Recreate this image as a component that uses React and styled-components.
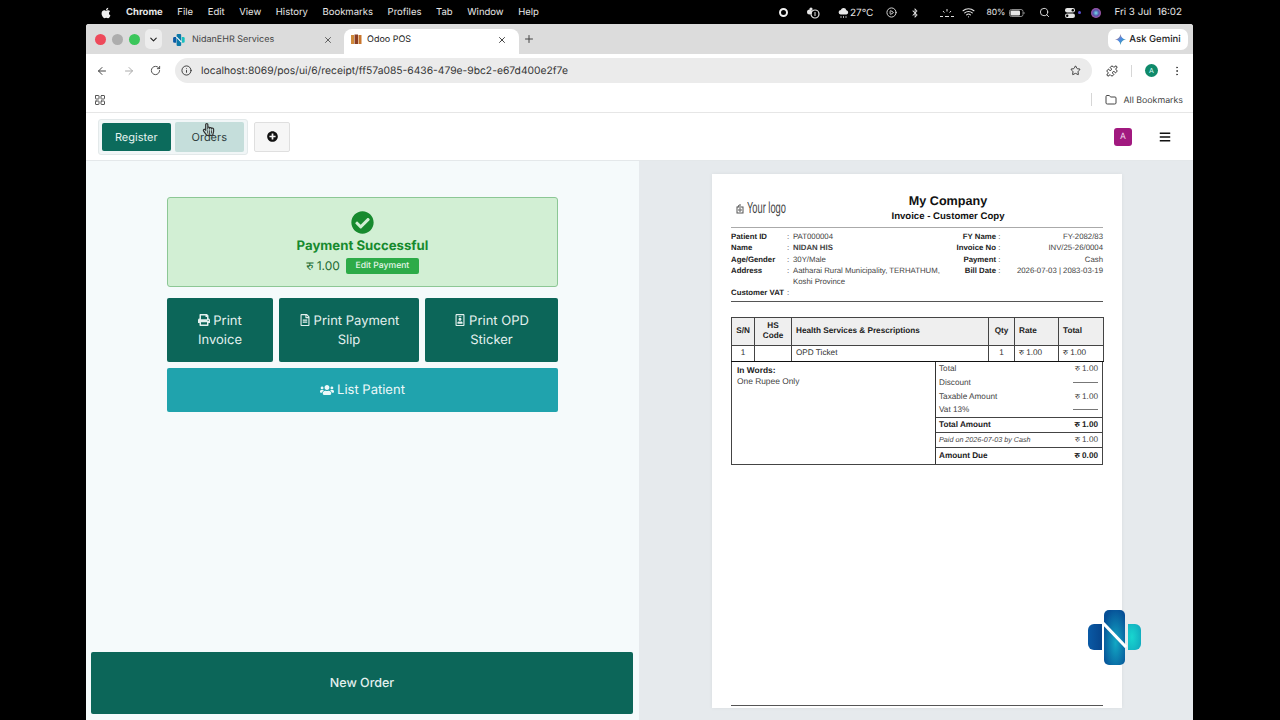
import React from "react";
import styled, { createGlobalStyle } from "styled-components";
import { FaApple, FaBluetoothB, FaPrint, FaRegFileAlt, FaRegIdBadge, FaUsers, FaCheckCircle, FaPlusCircle, FaBars, FaRegHandPointer } from "react-icons/fa";
import { ArrowLeft, ArrowRight, RotateCw, Info, Star, Puzzle, EllipsisVertical, X, Plus, ChevronDown, Folder, LayoutGrid, Wifi, Search, CirclePlay } from "lucide-react";

const Global = createGlobalStyle`
  html, body { margin: 0; padding: 0; background: #000; overflow: hidden; }
  * { box-sizing: border-box; }
  body { font-family: Inter, "Liberation Sans", sans-serif; text-rendering: geometricPrecision; }
`;
const Screen = styled.div`position: relative; width: 1280px; height: 720px; background: #000; display: flex; flex-direction: column; overflow: hidden;`;
const MenuBar = styled.div`height: 24px; display: flex; align-items: center; color: #e8e8e8; font-size: 9.5px; padding: 1px 0 0 100px; flex: none;`;
const MenuItem = styled.span`margin-left: ${p => p.$ml ?? 15}px; font-weight: ${p => (p.$bold ? 700 : 400)}; white-space: nowrap;`;
const StatusArea = styled.div`margin-left: auto; margin-right: 98px; display: flex; align-items: center; color: #e4e4e4;`;
const StatusSlot = styled.span`margin-left: ${p => p.$ml ?? 0}px; display: inline-flex; align-items: center; font-size: ${p => p.$fs ?? 10}px; white-space: nowrap;`;
const Ring = styled.span`width: 9px; height: 9px; border-radius: 50%; border: 2.5px solid #f0f0f0; display: block;`;
const Browser = styled.div`width: 1107px; margin-left: 86px; flex: 1; display: flex; flex-direction: column; overflow: hidden; background: #fff; border-radius: 3px 3px 0 0;`;
const TabStrip = styled.div`height: 30px; background: #dcdcdc; display: flex; align-items: flex-end; flex: none; padding-left: 9px; padding-right: 5px;`;
const Dots = styled.div`display: flex; gap: 6px; align-self: center;`;
const Dot = styled.span`width: 11px; height: 11px; border-radius: 50%; background: ${p => p.$c};`;
const ChevronBtn = styled.span`width: 17px; height: 20px; border-radius: 5px; background: #ededed; display: flex; align-items: center; justify-content: center; align-self: center; margin-left: 5px; color: #222;`;
const Tab = styled.div`height: 25px; width: ${p => p.$w}px; margin-left: ${p => p.$ml}px; display: flex; align-items: center; padding: 0 ${p => p.$pr}px 4px ${p => p.$pl}px; font-size: 9px; color: ${p => (p.$active ? "#222" : "#444")}; background: ${p => (p.$active ? "#fff" : "transparent")}; border-radius: 8px 8px 0 0;`;
const TabTitle = styled.span`flex: 1; margin-left: ${p => p.$ml ?? 5}px; white-space: nowrap;`;
const NewTab = styled.span`align-self: center; margin-left: 4px; display: flex; color: #444;`;
const GeminiPill = styled.div`margin-left: auto; align-self: center; width: 80px; height: 21px; background: #fff; border-radius: 7px; display: flex; align-items: center; justify-content: center; gap: 3px; font-size: 9.5px; font-weight: 500; color: #222;`;
const Toolbar = styled.div`height: 33px; display: flex; align-items: center; background: #fff; flex: none; padding-left: 10px; color: #444;`;
const NavIcon = styled.span`display: flex; margin-left: ${p => p.$ml ?? 0}px; color: ${p => p.$c ?? "#444"};`;
const UrlPill = styled.div`width: 917px; height: 25px; margin-left: 14px; background: #ebebeb; border-radius: 13px; display: flex; align-items: center; padding: 0 11px 0 6px; font-size: 10.3px; color: #333; white-space: nowrap;`;
const UrlText = styled.span`margin: 1px 0 0 9px; flex: 1;`;
const Separator = styled.span`width: 1px; height: ${p => p.$h ?? 12}px; background: #d6d6d6; margin-left: ${p => p.$ml}px;`;
const Avatar = styled.span`width: 13px; height: 13px; border-radius: 50%; background: #0f8a6a; color: #dff; font-size: 7px; display: flex; align-items: center; justify-content: center; margin-left: 13px;`;
const BookmarkBar = styled.div`height: 26px; display: flex; align-items: center; background: #fff; flex: none; padding-left: 8px; color: #555; border-bottom: 1px solid #e6e6e6;`;
const BookmarkLabel = styled.span`font-size: 8.8px; color: #444; margin: 1px 0 0 6px; white-space: nowrap;`;
const PosHeader = styled.header`height: 48px; display: flex; align-items: center; background: #fff; border-bottom: 1px solid #e4e8ea; flex: none; padding: 0 22px 0 12px;`;
const TabGroup = styled.div`height: 36px; width: 150px; background: #f1f6f7; border: 1px solid #e3e9ea; border-radius: 3px; display: flex; align-items: center; padding: 0 3px; gap: 4px;`;
const PosTab = styled.span`height: ${p => (p.$active ? 28 : 30)}px; width: ${p => (p.$active ? 69 : 70)}px; border-radius: 2px; background: ${p => (p.$active ? "#0c6b5c" : "#c5dedb")}; color: ${p => (p.$active ? "#e6f3f0" : "#2b3a3a")}; font-size: 11px; display: flex; align-items: center; justify-content: center;`;
const AddBtn = styled.span`width: 36px; height: 30px; margin-left: 6px; background: #f6f6f6; border: 1px solid #dfdfdf; border-radius: 2px; display: flex; align-items: center; justify-content: center; color: #111;`;
const UserBadge = styled.span`margin-left: auto; width: 18px; height: 18px; border-radius: 3px; background: #a1197f; color: #f2d8ec; font-size: 8.5px; display: flex; align-items: center; justify-content: center;`;
const Burger = styled.span`margin-left: 27px; display: flex; color: #111;`;
const Content = styled.main`flex: 1; display: flex; min-height: 0;`;
const LeftPanel = styled.section`width: 553px; background: #f5fafb; display: flex; flex-direction: column; align-items: center; padding: 36px 6px 6px 5px;`;
const Card = styled.div`width: 391px; margin-left: 1px; display: flex; flex-direction: column; gap: 6px;`;
const Success = styled.div`height: 90px; background: #d2efd4; border: 1px solid #8cc795; border-radius: 3px; margin-bottom: 5px; display: flex; flex-direction: column; align-items: center; padding-top: 13px; color: #178a2e;`;
const SuccessTitle = styled.div`font-size: 13.2px; font-weight: 700; margin-top: 4px; line-height: 16px;`;
const AmountRow = styled.div`display: flex; align-items: center; gap: 6px; margin-top: 3px; color: #1c6b32; font-size: 12px;`;
const EditBtn = styled.span`height: 16px; width: 73px; background: #2dab48; color: #e6f6e8; font-size: 8.6px; font-weight: 500; border-radius: 2px; display: flex; align-items: center; justify-content: center;`;
const PrintRow = styled.div`display: flex; gap: 6px;`;
const PrintBtn = styled.div`height: 64px; width: ${p => p.$w}px; flex: none; background: #0c6659; color: #e3f0ee; border-radius: 2px; font-size: 13px; line-height: 19.5px; text-align: center; display: flex; align-items: center; justify-content: center; padding: 2px 12px 0; svg { vertical-align: -1px; margin-right: 3px; }`;
const ListBtn = styled.div`height: 44px; background: #20a3ad; color: #ecf8f9; border-radius: 2px; font-size: 13px; display: flex; align-items: center; justify-content: center; gap: 3px;`;
const NewOrder = styled.div`margin-top: auto; width: 542px; height: 62px; padding-top: 1px; background: #0c6659; color: #e3f0ee; border-radius: 2px; font-size: 12.5px; font-weight: 500; display: flex; align-items: center; justify-content: center;`;
const RightPanel = styled.section`flex: 1; background: #e6eaed; padding: 13px 0 12px 73px; display: flex;`;
const Paper = styled.article`width: 410px; background: #fff; box-shadow: 0 0 4px rgba(0,0,0,.06); padding: 20px 19px 2px; display: flex; flex-direction: column; font-family: "Liberation Sans", Arial, sans-serif; color: #333;`;
const ReceiptHead = styled.div`display: flex; align-items: flex-start; height: 33px; border-bottom: 1px solid #aaa; box-sizing: content-box;`;
const LogoText = styled.div`width: 62px; padding-left: 5px; color: #444; white-space: nowrap; display: flex; align-items: center; gap: 3px; margin-top: 6px; svg { flex: none; }`;
const LogoWord = styled.span`font-size: 16px; display: inline-block; transform: scaleX(.58); transform-origin: left center;`;
const CompanyBlock = styled.div`flex: 1; text-align: center; color: #111; font-weight: 700;`;
const CompanyName = styled.div`font-size: 12.6px; line-height: 15px;`;
const CopyName = styled.div`font-size: 9.6px; line-height: 15px;`;
const InfoBlock = styled.div`display: flex; padding: 3px 0 2px; border-bottom: 1.5px solid #555; font-size: 7.8px; line-height: 11.3px;`;
const LeftInfo = styled.div`width: 215px; display: grid; grid-template-columns: 56px 6px 1fr; align-content: start;`;
const RightInfo = styled.div`flex: 1; display: grid; grid-template-columns: 50px 7px 1fr; align-content: start;`;
const InfoLabel = styled.span`font-weight: 700; color: #222; white-space: nowrap; text-align: ${p => (p.$right ? "right" : "left")};`;
const InfoValue = styled.span`color: #444; font-weight: ${p => (p.$bold ? 700 : 400)}; text-align: ${p => (p.$right ? "right" : "left")}; white-space: ${p => (p.$wrap ? "normal" : "nowrap")};`;
const ItemsTable = styled.table`width: 372px; margin-top: 15px; border-collapse: collapse; table-layout: fixed; font-size: 8.2px; color: #333;`;
const Th = styled.th`border: 1px solid #444; background: #efefef; height: 28px; font-weight: 700; line-height: 10px; color: #222; padding: 0 4px; text-align: ${p => p.$align ?? "left"};`;
const Td = styled.td`border: 1px solid #444; border-bottom: 1.5px solid #111; height: 16px; padding: 0 4px 2px; text-align: ${p => p.$align ?? "left"};`;
const Summary = styled.div`display: flex; width: 372px; height: 103px; border: 1px solid #444; border-top: 0; font-size: 8px; color: #444;`;
const Words = styled.div`width: 204px; padding: 3px 5px; line-height: 11px; font-size: 8.4px; border-right: 1px solid #333;`;
const WordsLabel = styled.div`font-weight: 700; color: #222;`;
const Totals = styled.div`flex: 1; display: flex; flex-direction: column;`;
const TotalsGroup = styled.div`padding: ${p => p.$pt ?? 0}px 4px 0 3px; display: flex; flex-direction: column; justify-content: ${p => (p.$pt === undefined ? "center" : "flex-start")}; height: ${p => p.$h}px; border-bottom: ${p => (p.$last ? "0" : "1px solid #444")}; font-weight: ${p => (p.$bold ? 700 : 400)}; color: ${p => (p.$bold ? "#222" : "#444")}; font-style: ${p => (p.$italic ? "italic" : "normal")}; font-size: ${p => (p.$italic ? 7.2 : 8.2)}px;`;
const TotalsRow = styled.div`display: flex; justify-content: space-between; align-items: center; height: 13.7px;`;
const Amount = styled.span`font-style: normal; font-size: 8.2px;`;
const Dash = styled.span`width: 25px; height: 1px; background: #777;`;
const Spacer = styled.div`flex: 1;`;
const FooterRule = styled.div`height: 1px; background: #555;`;
const Overlay = styled.div`position: absolute; left: ${p => p.$x}px; top: ${p => p.$y}px; display: flex; pointer-events: none;`;
const Rupee = styled.span`font-family: "Noto Sans", "DejaVu Sans", sans-serif;`;

const NLogo = ({ size = 54 }) => (
  <svg width={size} height={size * 55 / 54} viewBox="0 0 54 55">
    <defs>
      <radialGradient id="nc" cx="55%" cy="60%" r="65%"><stop offset="0" stopColor="#12a8c4" /><stop offset="1" stopColor="#064f96" /></radialGradient>
      <linearGradient id="nl" x1="0" x2="1"><stop offset="0" stopColor="#0a5aa5" /><stop offset="1" stopColor="#07458c" /></linearGradient>
      <radialGradient id="nr" cx="30%" cy="50%" r="70%"><stop offset="0" stopColor="#18d6cf" /><stop offset="1" stopColor="#12aec0" /></radialGradient>
    </defs>
    <path d="M14 14 H6 a6 6 0 0 0 -6 6 V34 a6 6 0 0 0 6 6 H14 Z" fill="url(#nl)" />
    <rect x="16" y="0" width="21" height="55" rx="5" fill="url(#nc)" />
    <path d="M40 14 H47 a6 6 0 0 1 6 6 V34 a6 6 0 0 1 -6 6 H40 Z" fill="url(#nr)" />
    <path d="M15 13 L38 37" stroke="#fff" strokeWidth="3.2" />
  </svg>
);
const OdooFav = () => (
  <svg width="11" height="11" viewBox="0 0 11 11"><rect x="0" y="1" width="3" height="9" fill="#d08a3a" /><rect x="3.5" y="0.5" width="3.5" height="9.5" fill="#8a3d22" /><rect x="7.5" y="1" width="3" height="9" fill="#c9762d" /></svg>
);
const NidanFav = () => (
  <svg width="12" height="12" viewBox="0 0 54 55"><path d="M14 14 H6 a6 6 0 0 0 -6 6 V34 a6 6 0 0 0 6 6 H14 Z" fill="#0a5aa5" /><rect x="16" y="0" width="21" height="55" rx="5" fill="#0a78a8" /><path d="M40 14 H47 a6 6 0 0 1 6 6 V34 a6 6 0 0 1 -6 6 H40 Z" fill="#18c0c0" /><path d="M15 13 L38 37" stroke="#fff" strokeWidth="5" /></svg>
);
const Gemini = () => (
  <svg width="11" height="11" viewBox="0 0 12 12">
    <defs><linearGradient id="gm" x1="0" y1="0" x2="1" y2="1"><stop offset="0" stopColor="#e8734a" /><stop offset=".5" stopColor="#4a8be8" /><stop offset="1" stopColor="#3aa86a" /></linearGradient></defs>
    <path d="M6 0 C6.5 3.5 8.5 5.5 12 6 C8.5 6.5 6.5 8.5 6 12 C5.5 8.5 3.5 6.5 0 6 C3.5 5.5 5.5 3.5 6 0Z" fill="url(#gm)" />
  </svg>
);
const TimerIcon = () => (
  <svg width="15" height="13" viewBox="0 0 15 13" fill="#e6e6e6"><circle cx="3.5" cy="6" r="2.5" /><circle cx="5" cy="3" r="1.6" /><circle cx="9" cy="8" r="4" fill="none" stroke="#e6e6e6" strokeWidth="1.2" /><rect x="8.5" y="6" width="1" height="4" /></svg>
);
const CloudIcon = () => (
  <svg width="11" height="12" viewBox="0 0 11 12" fill="#e6e6e6"><path d="M3 7.5a2.3 2.3 0 0 1-.2-4.6A3 3 0 0 1 8.4 3.2 2.2 2.2 0 0 1 8.5 7.5Z" /><path d="M3 9v2M5.5 9v2M8 9v2" stroke="#bbb" strokeWidth=".9" /></svg>
);
const BrightIcon = () => (
  <svg width="14" height="10" viewBox="0 0 14 10" stroke="#ddd" strokeWidth="1" fill="none"><path d="M0 8.5h3M5 8.5h4M11 8.5h3M7 1v2.5M3 3l1.4 1.6M11 3 9.6 4.6" /></svg>
);
const BatteryIcon = () => (
  <svg width="16" height="8" viewBox="0 0 16 8"><rect x=".5" y=".5" width="13.5" height="7" rx="2" fill="none" stroke="#888" /><rect x="1.5" y="1.5" width="9.5" height="5" rx="1" fill="#e6e6e6" /><path d="M15 3v2" stroke="#888" /></svg>
);
const ToggleIcon = () => (
  <svg width="10" height="10" viewBox="0 0 10 10" fill="#e4e4e4"><rect x="0" y="0" width="10" height="4.4" rx="2.2" /><rect x="0" y="5.6" width="10" height="4.4" rx="2.2" /><circle cx="7.8" cy="2.2" r="1.2" fill="#000" /><circle cx="2.2" cy="7.8" r="1.2" fill="#000" /></svg>
);
const Siri = () => (
  <svg width="10" height="10" viewBox="0 0 10 10"><defs><radialGradient id="sr"><stop offset="0" stopColor="#7de" /><stop offset=".6" stopColor="#55a" /><stop offset="1" stopColor="#a5a" /></radialGradient></defs><circle cx="5" cy="5" r="5" fill="url(#sr)" /></svg>
);
const SmallDot = styled.span`width: 3px; height: 3px; border-radius: 50%; background: #5a4fd0; margin-left: 3px;`;

const menu = ["File", "Edit", "View", "History", "Bookmarks", "Profiles", "Tab", "Window", "Help"];
const Rs = () => <Rupee>रु</Rupee>;

export default function App() {
  return (
    <Screen>
      <Global />
      <MenuBar>
        <FaApple size={12} color="#eee" />
        <MenuItem $bold $ml={14}>Chrome</MenuItem>
        {menu.map(m => <MenuItem key={m} $ml={14.6}>{m}</MenuItem>)}
        <StatusArea>
          <StatusSlot><Ring /></StatusSlot>
          <StatusSlot $ml={18}><TimerIcon /></StatusSlot>
          <StatusSlot $ml={17}><CloudIcon /></StatusSlot>
          <StatusSlot $ml={1}>27°C</StatusSlot>
          <StatusSlot $ml={13}><CirclePlay size={11} /></StatusSlot>
          <StatusSlot $ml={13}><FaBluetoothB size={10} /></StatusSlot>
          <StatusSlot $ml={20}><BrightIcon /></StatusSlot>
          <StatusSlot $ml={8}><Wifi size={13} /></StatusSlot>
          <StatusSlot $ml={11} $fs={8.5}>80%</StatusSlot>
          <StatusSlot $ml={4}><BatteryIcon /></StatusSlot>
          <StatusSlot $ml={14}><Search size={11} /></StatusSlot>
          <StatusSlot $ml={15}><ToggleIcon /></StatusSlot>
          <SmallDot />
          <StatusSlot $ml={10}><Siri /></StatusSlot>
          <StatusSlot $ml={13} $fs={9.8}>Fri 3 Jul&nbsp;&nbsp;16:02</StatusSlot>
        </StatusArea>
      </MenuBar>
      <Browser>
        <TabStrip>
          <Dots><Dot $c="#ee4a5b" /><Dot $c="#adadad" /><Dot $c="#3bc65b" /></Dots>
          <ChevronBtn><ChevronDown size={11} strokeWidth={2.5} /></ChevronBtn>
          <Tab $w={172} $ml={8} $pl={3} $pr={9}>
            <NidanFav />
            <TabTitle $ml={7}>NidanEHR Services</TabTitle>
            <X size={10} />
          </Tab>
          <Tab $w={175} $ml={2} $pl={7} $pr={12} $active>
            <OdooFav />
            <TabTitle>Odoo POS</TabTitle>
            <X size={10} />
          </Tab>
          <NewTab><Plus size={12} /></NewTab>
          <GeminiPill><Gemini />Ask Gemini</GeminiPill>
        </TabStrip>
        <Toolbar>
          <NavIcon><ArrowLeft size={12} /></NavIcon>
          <NavIcon $ml={15} $c="#aaa"><ArrowRight size={12} /></NavIcon>
          <NavIcon $ml={15}><RotateCw size={11} /></NavIcon>
          <UrlPill>
            <Info size={11} />
            <UrlText>localhost:8069/pos/ui/6/receipt/ff57a085-6436-479e-9bc2-e67d400e2f7e</UrlText>
            <Star size={11} color="#333" />
          </UrlPill>
          <NavIcon $ml={14}><Puzzle size={12} color="#333" /></NavIcon>
          <Separator $ml={13} />
          <Avatar>A</Avatar>
          <NavIcon $ml={13}><EllipsisVertical size={12} /></NavIcon>
        </Toolbar>
        <BookmarkBar>
          <LayoutGrid size={12} />
          <Spacer />
          <Separator $h={13} $ml={0} />
          <NavIcon $ml={13}><Folder size={12} /></NavIcon>
          <BookmarkLabel>All Bookmarks</BookmarkLabel>
          <Separator $h={0} $ml={9} />
        </BookmarkBar>
        <PosHeader>
          <TabGroup>
            <PosTab $active>Register</PosTab>
            <PosTab>Orders</PosTab>
          </TabGroup>
          <AddBtn><FaPlusCircle size={11} /></AddBtn>
          <UserBadge>A</UserBadge>
          <Burger><FaBars size={12} /></Burger>
        </PosHeader>
        <Content>
          <LeftPanel>
            <Card>
              <Success>
                <FaCheckCircle size={23} />
                <SuccessTitle>Payment Successful</SuccessTitle>
                <AmountRow><span><Rs /> 1.00</span><EditBtn>Edit Payment</EditBtn></AmountRow>
              </Success>
              <PrintRow>
                <PrintBtn $w={106}><span><FaPrint size={12} />Print Invoice</span></PrintBtn>
                <PrintBtn $w={140}><span><FaRegFileAlt size={12} />Print Payment Slip</span></PrintBtn>
                <PrintBtn $w={133}><span><FaRegIdBadge size={12} />Print OPD Sticker</span></PrintBtn>
              </PrintRow>
              <ListBtn><FaUsers size={14} />List Patient</ListBtn>
            </Card>
            <NewOrder>New Order</NewOrder>
          </LeftPanel>
          <RightPanel>
            <Paper>
              <ReceiptHead>
                <LogoText>
                  <svg width="8" height="10" viewBox="0 0 8 10" fill="none" stroke="#555"><rect x="1" y="3" width="6" height="6" /><path d="M2 3 3 1h2" /><circle cx="4" cy="6" r="1.2" /></svg>
                  <LogoWord>Your logo</LogoWord>
                </LogoText>
                <CompanyBlock>
                  <CompanyName>My Company</CompanyName>
                  <CopyName>Invoice - Customer Copy</CopyName>
                </CompanyBlock>
              </ReceiptHead>
              <InfoBlock>
                <LeftInfo>
                  <InfoLabel>Patient ID</InfoLabel><span>:</span><InfoValue>PAT000004</InfoValue>
                  <InfoLabel>Name</InfoLabel><span>:</span><InfoValue $bold>NIDAN HIS</InfoValue>
                  <InfoLabel>Age/Gender</InfoLabel><span>:</span><InfoValue>30Y/Male</InfoValue>
                  <InfoLabel>Address</InfoLabel><span>:</span><InfoValue $wrap>Aatharai Rural Municipality, TERHATHUM, Koshi Province</InfoValue>
                  <InfoLabel>Customer VAT</InfoLabel><span>:</span><span />
                </LeftInfo>
                <RightInfo>
                  <InfoLabel $right>FY Name</InfoLabel><span>&nbsp;:</span><InfoValue $right>FY-2082/83</InfoValue>
                  <InfoLabel $right>Invoice No</InfoLabel><span>&nbsp;:</span><InfoValue $right>INV/25-26/0004</InfoValue>
                  <InfoLabel $right>Payment</InfoLabel><span>&nbsp;:</span><InfoValue $right>Cash</InfoValue>
                  <InfoLabel $right>Bill Date</InfoLabel><span>&nbsp;:</span><InfoValue $right>2026-07-03 | 2083-03-19</InfoValue>
                </RightInfo>
              </InfoBlock>
              <ItemsTable>
                <colgroup>
                  <col width="23" /><col width="37" /><col width="197" /><col width="26" /><col width="44" /><col width="45" />
                </colgroup>
                <thead>
                  <tr>
                    <Th $align="center">S/N</Th><Th $align="center">HS Code</Th><Th>Health Services &amp; Prescriptions</Th>
                    <Th $align="center">Qty</Th><Th>Rate</Th><Th>Total</Th>
                  </tr>
                </thead>
                <tbody>
                  <tr>
                    <Td $align="center">1</Td><Td /><Td>OPD Ticket</Td><Td $align="center">1</Td><Td><Rs /> 1.00</Td><Td><Rs /> 1.00</Td>
                  </tr>
                </tbody>
              </ItemsTable>
              <Summary>
                <Words><WordsLabel>In Words:</WordsLabel>One Rupee Only</Words>
                <Totals>
                  <TotalsGroup $h={56} $pt={0}>
                    <TotalsRow><span>Total</span><Amount><Rs /> 1.00</Amount></TotalsRow>
                    <TotalsRow><span>Discount</span><Dash /></TotalsRow>
                    <TotalsRow><span>Taxable Amount</span><Amount><Rs /> 1.00</Amount></TotalsRow>
                    <TotalsRow><span>Vat 13%</span><Dash /></TotalsRow>
                  </TotalsGroup>
                  <TotalsGroup $h={15} $bold><TotalsRow><span>Total Amount</span><Amount><Rs /> 1.00</Amount></TotalsRow></TotalsGroup>
                  <TotalsGroup $h={15} $italic><TotalsRow><span>Paid on 2026-07-03 by Cash</span><Amount><Rs /> 1.00</Amount></TotalsRow></TotalsGroup>
                  <TotalsGroup $h={16} $bold $last><TotalsRow><span>Amount Due</span><Amount><Rs /> 0.00</Amount></TotalsRow></TotalsGroup>
                </Totals>
              </Summary>
              <Spacer />
              <FooterRule />
            </Paper>
          </RightPanel>
        </Content>
      </Browser>
      <Overlay $x={1088} $y={610}><NLogo /></Overlay>
      <Overlay $x={202} $y={123}><FaRegHandPointer size={13} color="#333" /></Overlay>
    </Screen>
  );
}
